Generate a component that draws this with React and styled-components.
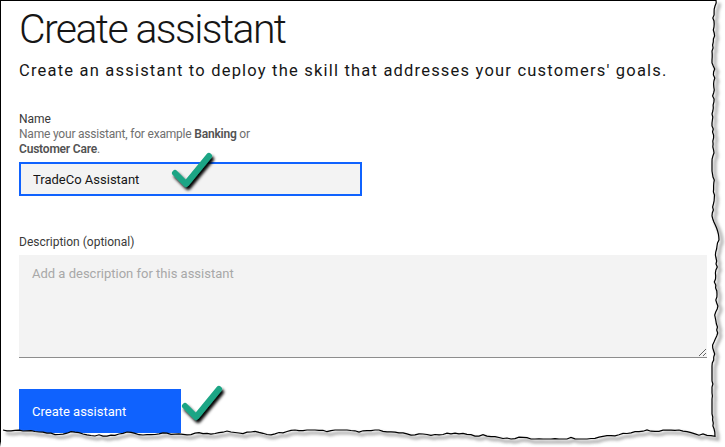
import React from 'react';
import styled, { createGlobalStyle } from 'styled-components';

const GlobalStyle = createGlobalStyle`
  html, body {
    margin: 0;
    padding: 0;
    background: #ffffff;
  }
  body {
    font-family: 'Roboto', 'Liberation Sans', sans-serif;
    color: #161616;
  }
`;

// simple seeded noise so the torn edge is the same every render
const makeRand = (seed) => {
  let s = seed;
  return () => {
    s = (s * 9301 + 49297) % 233280;
    return s / 233280;
  };
};

const buildTornEdge = () => {
  const rand = makeRand(7);
  const pts = [];
  let x = 716;
  for (let y = 0; y <= 434; y += 3) {
    x += (rand() - 0.5) * 3;
    x = Math.max(712, Math.min(720, x));
    pts.push([x, y]);
  }
  let y = 436;
  for (let xx = Math.round(x); xx >= 0; xx -= 4) {
    y += (rand() - 0.5) * 3;
    y = Math.max(430, Math.min(439, y));
    pts.push([xx, y]);
  }
  return pts;
};

const TornEdge = () => {
  const pts = buildTornEdge();
  const line = pts.map((p, i) => `${i ? 'L' : 'M'}${p[0].toFixed(1)},${p[1].toFixed(1)}`).join(' ');
  const fill = `${line} L0,447 L725,447 L725,0 Z`;
  return (
    <EdgeSvg width="725" height="447" viewBox="0 0 725 447">
      <defs>
        <filter id="blur" x="-5%" y="-5%" width="110%" height="110%">
          <feGaussianBlur stdDeviation="1.4" />
        </filter>
      </defs>
      <path d={fill} fill="#ffffff" />
      <path d={line} transform="translate(3,3)" fill="none" stroke="#8a8a8a" strokeWidth="3" filter="url(#blur)" opacity="0.7" />
      <path d={line} fill="none" stroke="#000000" strokeWidth="1.2" />
    </EdgeSvg>
  );
};

const Check = ({ className }) => (
  <svg className={className} width="52" height="44" viewBox="0 0 52 44">
    <defs>
      <filter id="checkShadow" x="-30%" y="-30%" width="160%" height="160%">
        <feGaussianBlur in="SourceAlpha" stdDeviation="1.5" />
        <feOffset dx="2" dy="3" result="off" />
        <feMerge>
          <feMergeNode in="off" />
          <feMergeNode in="SourceGraphic" />
        </feMerge>
      </filter>
    </defs>
    <path
      d="M6,24 L17,35 L40,7"
      fill="none"
      stroke="#1ea585"
      strokeWidth="6"
      strokeLinecap="round"
      strokeLinejoin="round"
      filter="url(#checkShadow)"
    />
  </svg>
);

export default function App() {
  return (
    <Page>
      <GlobalStyle />
      <Sheet>
        <Title>Create assistant</Title>
        <Subtitle>Create an assistant to deploy the skill that addresses your customers' goals.</Subtitle>

        <Field>
          <Label>Name</Label>
          <Helper>
            Name your assistant, for example <b>Banking</b> or
            <br />
            <b>Customer Care</b>.
          </Helper>
          <InputWrap>
            <Input defaultValue="TradeCo Assistant" />
            <InputCheck />
          </InputWrap>
        </Field>

        <Field $gap={38}>
          <Label>Description (optional)</Label>
          <TextArea placeholder="Add a description for this assistant" />
        </Field>

        <Actions>
          <Button>Create assistant</Button>
          <ButtonCheck />
        </Actions>
      </Sheet>
      <TornEdge />
    </Page>
  );
}

const Page = styled.div`
  position: relative;
  width: 725px;
  height: 447px;
  overflow: hidden;
  background: #ffffff;
`;

const Sheet = styled.div`
  box-sizing: border-box;
  height: 447px;
  border-left: 1px solid #000;
  border-top: 1px solid #000;
  padding: 0 18px 0 18px;
  display: flex;
  flex-direction: column;
`;

const EdgeSvg = styled.svg`
  position: absolute;
  left: 0;
  top: 0;
  pointer-events: none;
`;

const Title = styled.h1`
  margin: 3px 0 0;
  font-size: 41px;
  font-weight: 300;
  line-height: 50px;
  color: #161616;
  letter-spacing: -1.6px;
`;

const Subtitle = styled.p`
  margin: 7px 0 0;
  font-size: 16.5px;
  line-height: 20px;
  color: #161616;
  letter-spacing: 1.2px;
`;

const Field = styled.div`
  display: flex;
  flex-direction: column;
  margin-top: ${(p) => p.$gap || 30}px;
`;

const Label = styled.label`
  font-size: 12px;
  line-height: 16px;
  color: #393939;
`;

const Helper = styled.div`
  font-size: 12px;
  line-height: 15px;
  color: #6f6f6f;
  letter-spacing: -0.2px;

  b {
    font-weight: 600;
    color: #525252;
  }
`;

const InputWrap = styled.div`
  position: relative;
  margin-top: 5px;
  width: 343px;
`;

const Input = styled.input`
  box-sizing: border-box;
  width: 343px;
  height: 34px;
  padding: 0 12px;
  border: 2px solid #0f62fe;
  background: #f3f3f3;
  font-family: 'Roboto', 'Liberation Sans', sans-serif;
  font-size: 13px;
  color: #161616;
  outline: none;
`;

const InputCheck = styled(Check)`
  position: absolute;
  left: 150px;
  top: -13px;
`;

const TextArea = styled.textarea`
  box-sizing: border-box;
  margin-top: 5px;
  width: 688px;
  height: 103px;
  padding: 11px 13px;
  border: none;
  border-bottom: 1px solid #8d8d8d;
  background: #f3f3f3;
  font-family: 'Roboto', 'Liberation Sans', sans-serif;
  font-size: 13px;
  color: #161616;
  resize: vertical;
  outline: none;

  &::placeholder {
    color: #a8a8a8;
  }
`;

const Actions = styled.div`
  position: relative;
  display: flex;
  align-items: center;
  margin-top: 31px;
`;

const Button = styled.button`
  box-sizing: border-box;
  width: 162px;
  height: 44px;
  padding: 0 13px;
  border: none;
  background: #0f62fe;
  color: #ffffff;
  font-family: 'Roboto', 'Liberation Sans', sans-serif;
  font-size: 13px;
  text-align: left;
  cursor: pointer;
`;

const ButtonCheck = styled(Check)`
  position: absolute;
  left: 160px;
  top: -7px;
`;
